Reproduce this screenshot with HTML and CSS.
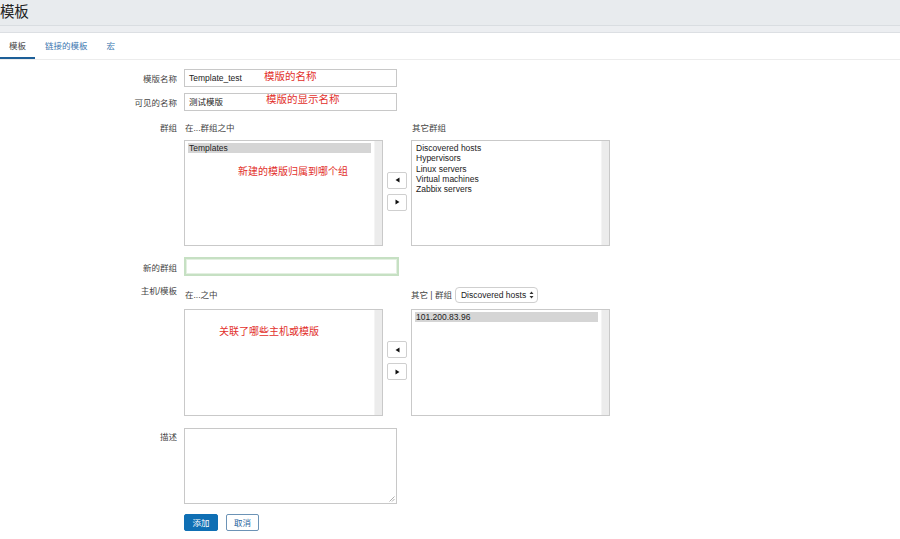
FILE: index.html
```html
<!DOCTYPE html>
<html lang="zh">
<head>
<meta charset="utf-8">
<title>模板</title>
<link rel="stylesheet" href="styles.css">
</head>
<body>
<header class="page-head">
  <h1 class="page-title">模板</h1>
</header>
<div class="head-band"></div>
<nav class="tabs">
  <a class="tab active">模板</a>
  <a class="tab">链接的模板</a>
  <a class="tab">宏</a>
</nav>
<form class="form">
  <div class="row row-name">
    <label class="lbl">模版名称</label>
    <div class="field">
      <div class="input">Template_test</div>
      <span class="note note-name">模版的名称</span>
    </div>
  </div>
  <div class="row row-visible">
    <label class="lbl">可见的名称</label>
    <div class="field">
      <div class="input">测试模版</div>
      <span class="note note-visible">模版的显示名称</span>
    </div>
  </div>
  <div class="row row-groups">
    <label class="lbl lbl-top">群组</label>
    <div class="pair">
      <div class="sub">在...群组之中</div>
      <div></div>
      <div class="sub">其它群组</div>
      <div class="list">
        <div class="items"><div class="item sel">Templates</div></div>
        <div class="track"></div>
        <span class="note note-group">新建的模版归属到哪个组</span>
      </div>
      <div class="movers">
        <button type="button" class="mv"><svg width="5" height="6" viewBox="0 0 5 6"><path d="M4.5 0.5 L0.5 3 L4.5 5.5 Z" fill="#111"/></svg></button>
        <button type="button" class="mv"><svg width="5" height="6" viewBox="0 0 5 6"><path d="M0.5 0.5 L4.5 3 L0.5 5.5 Z" fill="#111"/></svg></button>
      </div>
      <div class="list">
        <div class="items">
          <div class="item">Discovered hosts</div>
          <div class="item">Hypervisors</div>
          <div class="item">Linux servers</div>
          <div class="item">Virtual machines</div>
          <div class="item">Zabbix servers</div>
        </div>
        <div class="track"></div>
      </div>
    </div>
  </div>
  <div class="row row-newgroup">
    <label class="lbl">新的群组</label>
    <div class="input input-focus"></div>
  </div>
  <div class="row row-hosts">
    <label class="lbl lbl-top2">主机/模板</label>
    <div class="pair pair-hosts">
      <div class="sub">在...之中</div>
      <div></div>
      <div class="sub sub-select">其它 | 群组
        <span class="select">Discovered hosts
          <svg width="5" height="8" viewBox="0 0 5 8"><path d="M2.5 0.5 L4.5 3 L0.5 3 Z M2.5 7.5 L4.5 5 L0.5 5 Z" fill="#333"/></svg>
        </span>
      </div>
      <div class="list">
        <div class="items"></div>
        <div class="track"></div>
        <span class="note note-hosts">关联了哪些主机或模版</span>
      </div>
      <div class="movers">
        <button type="button" class="mv"><svg width="5" height="6" viewBox="0 0 5 6"><path d="M4.5 0.5 L0.5 3 L4.5 5.5 Z" fill="#111"/></svg></button>
        <button type="button" class="mv"><svg width="5" height="6" viewBox="0 0 5 6"><path d="M0.5 0.5 L4.5 3 L0.5 5.5 Z" fill="#111"/></svg></button>
      </div>
      <div class="list">
        <div class="items"><div class="item sel">101.200.83.96</div></div>
        <div class="track"></div>
      </div>
    </div>
  </div>
  <div class="row row-desc">
    <label class="lbl lbl-desc">描述</label>
    <div class="textarea">
      <svg class="grip" width="6" height="6" viewBox="0 0 6 6"><path d="M5.5 0.5 L0.5 5.5 M5.5 3 L3 5.5" stroke="#999" stroke-width="0.8" fill="none"/></svg>
    </div>
  </div>
  <div class="row row-buttons">
    <div class="lbl"></div>
    <div class="buttons">
      <button type="button" class="btn btn-primary">添加</button>
      <button type="button" class="btn btn-alt">取消</button>
    </div>
  </div>
</form>
</body>
</html>
```

FILE: styles.css
```css
* { box-sizing: border-box; }

body {
  margin: 0;
  background: #ffffff;
  font-family: "Liberation Sans", "Noto Sans CJK SC", sans-serif;
  font-size: 8.5px;
  color: #3a3a3a;
}

.page-head {
  height: 25px;
  background: #e8ebee;
}

.page-title {
  margin: 0;
  font-size: 14.5px;
  font-weight: normal;
  line-height: 25px;
  color: #222;
  letter-spacing: -0.3px;
}

.head-band {
  height: 8px;
  background: #eceef1;
  border-top: 1px solid #d9dde1;
  border-bottom: 1px solid #dcdfe3;
}

.tabs {
  display: flex;
  height: 27px;
  border-bottom: 1px solid #ececec;
  align-items: stretch;
}

.tab {
  display: flex;
  align-items: center;
  padding: 0 9px;
  color: #3d77b0;
  font-size: 8.5px;
  border-bottom: 2px solid transparent;
  margin-right: 1px;
}

.tab.active {
  color: #444;
  border-bottom-color: #1d5f98;
}

.form {
  padding-top: 9px;
  display: flex;
  flex-direction: column;
}

.row {
  display: flex;
  align-items: center;
}

.lbl {
  width: 177px;
  margin-right: 7px;
  text-align: right;
  color: #444;
  flex: none;
}

.lbl-top { align-self: flex-start; line-height: 12px; }
.lbl-top2 { align-self: flex-start; line-height: 10px; }
.lbl-desc { align-self: flex-start; line-height: 12px; padding-top: 3px; }

.field { position: relative; }

.input {
  width: 213px;
  height: 18px;
  border: 1px solid #c8c8c8;
  background: #fff;
  padding-left: 4px;
  line-height: 16px;
  color: #222;
}

.row-visible { margin-top: 6px; }
.row-groups { margin-top: 11px; align-items: flex-start; }
.row-newgroup { margin-top: 11px; }
.row-hosts { margin-top: 10px; align-items: flex-start; }
.row-desc { margin-top: 12px; align-items: flex-start; }
.row-buttons { margin-top: 10px; }

.input-focus {
  width: 215px;
  height: 19px;
  border: 2px solid #c6e0c3;
  box-shadow: inset 0 0 0 1px #e3f0e1;
}

.note {
  position: absolute;
  color: #e2302b;
  font-size: 10.5px;
  line-height: 12px;
  white-space: nowrap;
  font-family: "Noto Sans CJK SC", sans-serif;
}

.note-name { left: 80px; top: 1px; }
.note-visible { left: 82px; top: 0; }
.note-group { left: 53px; top: 24px; font-size: 10px; }
.note-hosts { left: 34px; top: 15px; font-size: 10px; }

.pair {
  display: grid;
  grid-template-columns: 199px 20px 199px;
  grid-template-rows: 12px 106px;
  column-gap: 4px;
  row-gap: 6px;
}

.pair-hosts {
  grid-template-rows: 16px 107px;
  row-gap: 7px;
}

.sub {
  line-height: 12px;
  color: #444;
  padding-left: 1px;
}

.pair-hosts .sub { line-height: 16px; padding-top: 1px; }

.sub-select {
  display: flex;
  align-items: center;
  gap: 3px;
  white-space: nowrap;
  padding-left: 0;
}

.select {
  display: inline-flex;
  align-items: center;
  gap: 3px;
  height: 16px;
  padding: 0 3px 0 5px;
  border: 1px solid #cfcfcf;
  border-radius: 4px;
  background: #fff;
  color: #222;
  line-height: 14px;
}

.list {
  position: relative;
  display: flex;
  border: 1px solid #c9c9c9;
  background: #fff;
}

.items {
  flex: 1;
  padding: 2px 3px;
}

.item {
  line-height: 10.3px;
  color: #222;
  padding-left: 1px;
  white-space: nowrap;
}

.item.sel { background: #d5d5d5; }

.track {
  width: 8px;
  background: #ececec;
  border-left: 1px solid #f4f4f4;
}

.movers {
  align-self: center;
  display: flex;
  flex-direction: column;
  gap: 5px;
  padding-bottom: 4px;
}

.mv {
  width: 20px;
  height: 17px;
  padding: 0;
  margin: 0;
  border: 1px solid #cfcfcf;
  border-radius: 2px;
  background: #fff;
  display: flex;
  align-items: center;
  justify-content: center;
}

.textarea {
  position: relative;
  width: 213px;
  height: 76px;
  border: 1px solid #c8c8c8;
  background: #fff;
}

.grip {
  position: absolute;
  right: 1px;
  bottom: 1px;
}

.buttons {
  display: flex;
  gap: 8px;
}

.btn {
  height: 17px;
  padding: 0;
  margin: 0;
  font-family: "Noto Sans CJK SC", sans-serif;
  font-size: 8.5px;
  border-radius: 2px;
  line-height: 15px;
}

.btn-primary {
  width: 34px;
  background: #0f6fb4;
  border: 1px solid #0f6fb4;
  color: #fff;
}

.btn-alt {
  width: 33px;
  background: #fff;
  border: 1px solid #6c93b6;
  color: #2a669d;
}
```
